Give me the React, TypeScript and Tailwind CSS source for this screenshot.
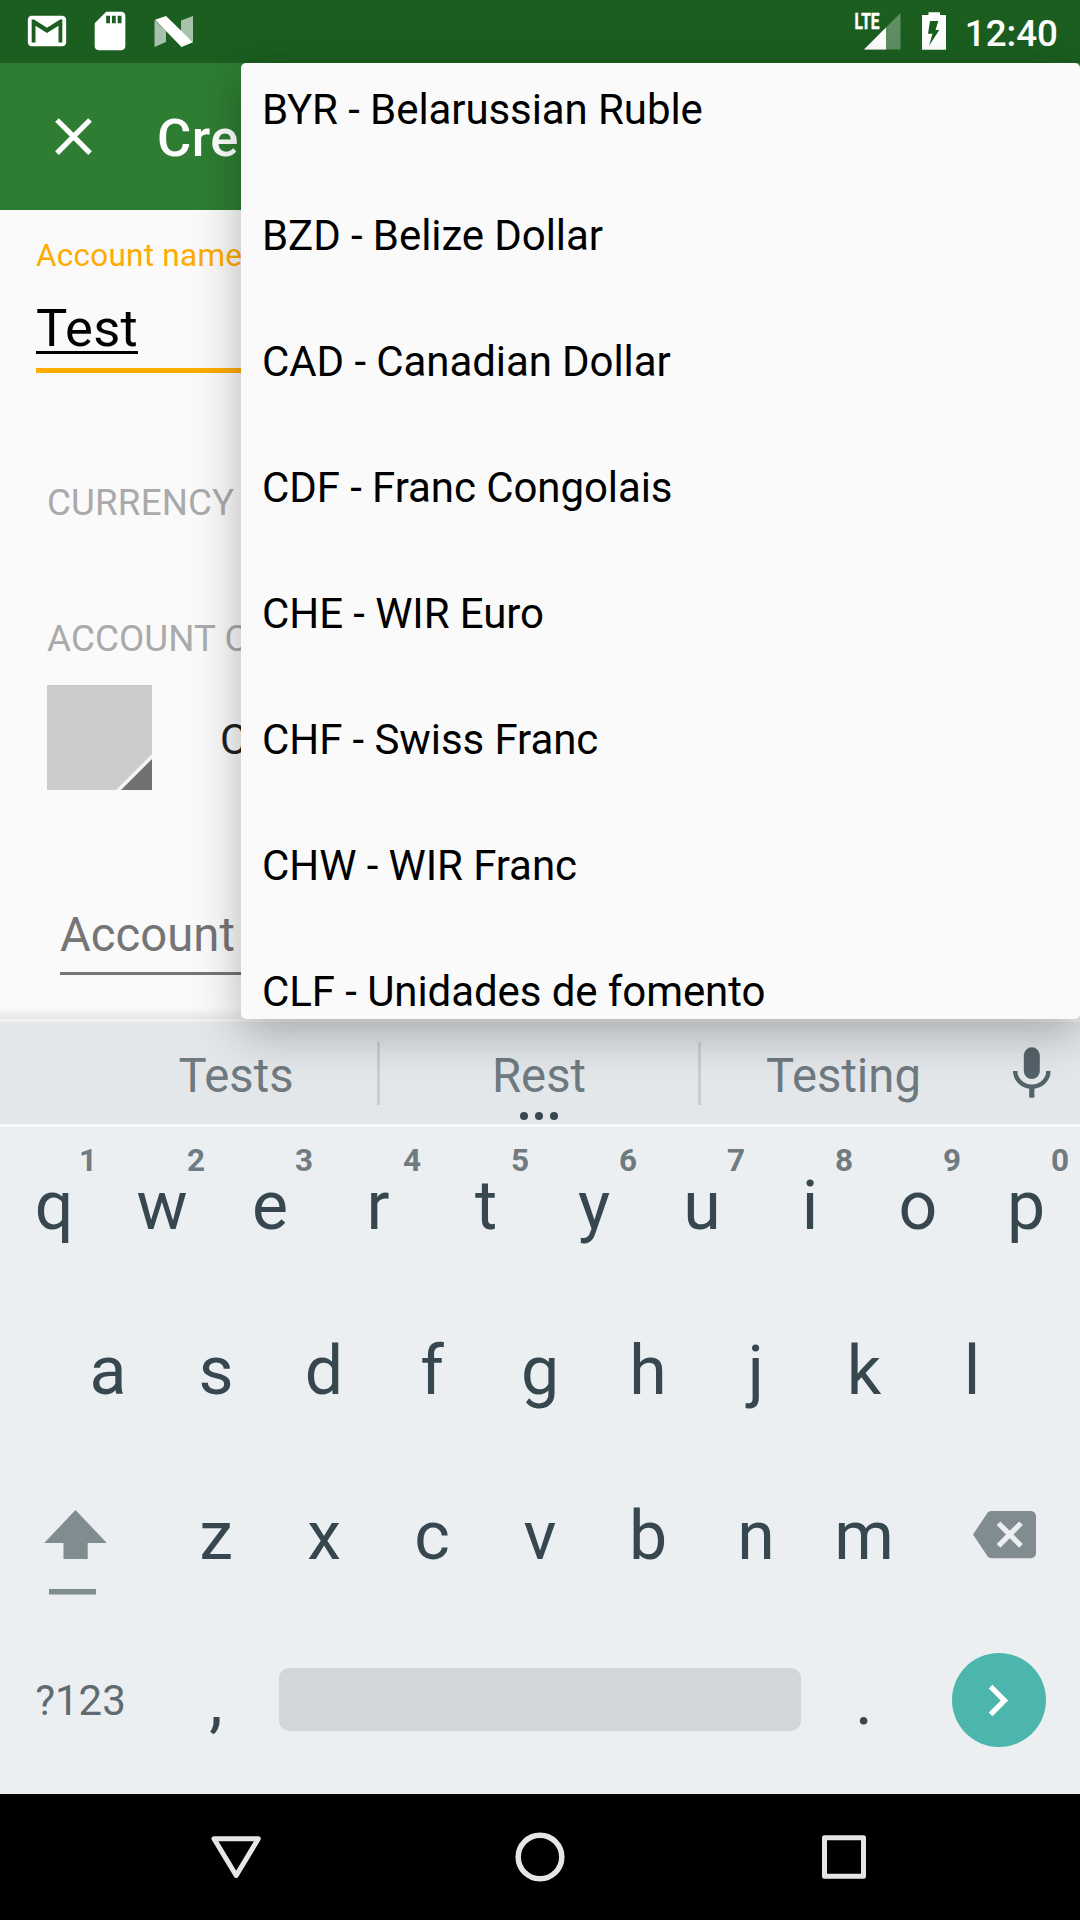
import React from "react";

const currencies = [
  "BYR - Belarussian Ruble",
  "BZD - Belize Dollar",
  "CAD - Canadian Dollar",
  "CDF - Franc Congolais",
  "CHE - WIR Euro",
  "CHF - Swiss Franc",
  "CHW - WIR Franc",
  "CLF - Unidades de fomento",
];

const topRow: [string, string][] = [
  ["q", "1"], ["w", "2"], ["e", "3"], ["r", "4"], ["t", "5"],
  ["y", "6"], ["u", "7"], ["i", "8"], ["o", "9"], ["p", "0"],
];

function StatusBar() {
  return (
    <header className="flex h-[63px] shrink-0 items-start bg-[#1b5e20] text-white">
      <svg className="ml-[24px] mt-2 size-[46px]" viewBox="0 0 24 24" fill="currentColor">
        <path d="M20 4H4c-1.1 0-2 .9-2 2v12c0 1.1.9 2 2 2h16c1.1 0 2-.9 2-2V6c0-1.1-.9-2-2-2zm0 14h-2V9.25L12 13 6 9.25V18H4V6h1.2l6.8 4.25L18.8 6H20v12z" />
      </svg>
      <svg className="ml-[17px] mt-2 size-[46px]" viewBox="0 0 24 24" fill="currentColor">
        <path d="M18 2h-8L4.02 8 4 20c0 1.1.9 2 2 2h12c1.1 0 2-.9 2-2V4c0-1.1-.9-2-2-2zm-6 6h-2V4h2v4zm3 0h-2V4h2v4zm3 0h-2V4h2v4z" />
      </svg>
      <svg className="ml-[17px] mt-2 h-[46px] w-[50px]" viewBox="150 8 50 46" fill="currentColor">
        <path opacity=".62" d="M154.5 20v27l11.500-5V31zM181 20.500l12-4.500v26l-12-11z" />
        <path d="M155 19.800L166 16l27 26.300L181.500 47z" />
      </svg>
      <svg className="ml-auto mt-2 h-[46px] w-[50px]" viewBox="853 8 50 46" fill="currentColor">
        <path opacity=".3" d="M864 49.500h36.500V13z" />
        <path d="M864 49.500h22V27.500z" />
        <text x="854.5" y="29.2" fontFamily="Roboto" fontWeight="700" fontSize="22" stroke="currentColor" strokeWidth=".5" textLength="25" lengthAdjust="spacingAndGlyphs">LTE</text>
      </svg>
      <svg className="ml-[17px] mt-2 h-[46px] w-[28px]" viewBox="920 8 28 46" fill="currentColor">
        <path fillRule="evenodd" d="M928.500 12.300H940V15h6v34.700h-24V15h6.500zM930 21l-2 12.700h4.500L929 45.700 939.300 30h-3.800l2.800-9z" />
      </svg>
      <span className="ml-[17px] mr-[22px] mt-2 text-[36.75px] font-medium leading-[51px]">12:40</span>
    </header>
  );
}

function AppBar() {
  return (
    <div className="flex h-[147px] shrink-0 items-center bg-[#2e7d32] text-white">
      <svg className="ml-[42px] size-[63px]" viewBox="0 0 24 24" fill="currentColor">
        <path d="M19 6.410L17.590 5 12 10.590 6.410 5 5 6.410 10.590 12 5 17.590 6.410 19 12 13.410 17.590 19 19 17.590 13.410 12z" />
      </svg>
      <h1 className="ml-[52px] mt-[3px] text-[52.5px] font-medium leading-[60px] tracking-[0.5px]">Cre</h1>
    </div>
  );
}

function AccountForm() {
  return (
    <main className="flex h-[809px] shrink-0 flex-col items-start bg-[#fafafa]">
      <label className="ml-9 mt-[26px] text-[31.5px] leading-10 tracking-[0.25px] text-[#ffab00]">Account name</label>
      <div className="ml-9 mt-[30px] border-b-3 border-black text-[52.5px] leading-[45px] tracking-[0.3px] text-black">Test</div>
      <div className="ml-9 mt-[14px] h-[5px] w-[1008px] bg-[#ffab00]" />
      <div className="ml-[47px] mt-[110px] text-[36.75px] leading-10 tracking-[0.15px] text-[#aaaaaa]">CURRENCY</div>
      <div className="ml-[47px] mt-24 text-[36.75px] leading-10 tracking-[0.1px] text-[#aaaaaa]">ACCOUNT C</div>
      <div className="ml-[47px] mt-[26px] flex items-center">
        <svg className="size-[105px]" viewBox="0 0 105 105">
          <path fill="#cccccc" d="M0 0h105v105H0z" />
          <path fill="#f5f5f5" d="M105 69v36H69z" />
          <path fill="#707070" d="M105 74v31H74z" />
        </svg>
        <span className="ml-[68px] mt-1 text-[42px] leading-[50px] text-[#212121]">C</span>
      </div>
      <div className="ml-[60px] mt-[120px] text-[47.25px] leading-[50px] text-[#757575]">Account</div>
      <div className="ml-[60px] mt-[12px] h-[2.5px] w-[960px] bg-[#757575]" />
      <div className="mt-auto h-3 w-full bg-linear-to-b from-transparent to-black/8" />
    </main>
  );
}

function CurrencyMenu() {
  return (
    <ul className="absolute left-[241px] top-[63px] h-[956px] w-[839px] rounded-[5px] bg-[#fafafa] text-[42px] text-black shadow-[0_14px_48px_rgba(0,0,0,0.28)]">
      <div className="-mt-4">
        {currencies.map((c) => (
          <li key={c} className="h-[126px] pl-[21px] leading-[126px] tracking-[-0.08px] last:h-[90px]">{c}</li>
        ))}
      </div>
    </ul>
  );
}

function Suggestions() {
  return (
    <div className="flex h-[102px] items-center bg-[#e3e7ea] text-center text-[47.25px] leading-[60px] text-[#6e7a80]">
      <span className="ml-[95px] mt-1.5 w-[282px]">Tests</span>
      <span className="h-[63px] w-[3px] bg-[#c9cfd1]" />
      <span className="relative mt-1.5 w-[318px]">
        Rest
        <span className="absolute left-[140px] top-[66px] flex gap-[7px]">
          <i className="size-2 rounded-full bg-[#37474f]" />
          <i className="size-2 rounded-full bg-[#37474f]" />
          <i className="size-2 rounded-full bg-[#37474f]" />
        </span>
      </span>
      <span className="h-[63px] w-[3px] bg-[#c9cfd1]" />
      <span className="mt-1.5 w-[285px]">Testing</span>
      <svg className="ml-[14px] size-[63px]" viewBox="1000 1042 63 63" fill="#546269">
        <rect x="1023.800" y="1047.300" width="16" height="31.700" rx="8" />
        <path fill="none" stroke="#546269" strokeWidth="4.400" d="M1015.200 1071a16.600 15.600 0 0 0 33.200 0" />
        <path d="M1029.200 1086h5.200v11.700h-5.200z" />
      </svg>
    </div>
  );
}

function Key({ label, hint }: { label: string; hint?: string }) {
  return (
    <div className="relative w-[108px] shrink-0 text-center leading-[158px]">
      {label}
      {hint && (
        <span className="absolute left-[79px] top-[19px] text-[31.5px] font-bold leading-[30px] text-[#6f7b80]">{hint}</span>
      )}
    </div>
  );
}

function Keyboard() {
  return (
    <section className="flex h-[772px] shrink-0 flex-col bg-[#ebeff2] text-[68px] text-[#37474f]">
      <Suggestions />
      <div className="h-[3px] bg-[#f7f9fa]" />
      <div className="flex h-[165px]">
        {topRow.map(([k, n]) => <Key key={k} label={k} hint={n} />)}
      </div>
      <div className="flex h-[165px] justify-center">
        {"asdfghjkl".split("").map((k) => <Key key={k} label={k} />)}
      </div>
      <div className="flex h-[165px]">
        <svg className="h-[165px] w-[162px]" viewBox="0 1457 162 165" fill="#808c90">
          <path d="M75.500 1510l31.300 33H87.700v16H63.500v-16H44.200zM49 1589h47v5.500H49z" />
        </svg>
        {"zxcvbnm".split("").map((k) => <Key key={k} label={k} />)}
        <svg className="ml-[55px] mt-[46px] size-[63px]" viewBox="0 0 24 24" fill="#808c90">
          <path d="M22 3H7c-.69 0-1.230.35-1.590.88L0 12l5.410 8.110c.36.53.9.89 1.590.89h15c1.100 0 2-.9 2-2V5c0-1.100-.9-2-2-2zm-3 12.590L17.590 17 14 13.410 10.410 17 9 15.590 12.590 12 9 8.410 10.410 7 14 10.590 17.590 7 19 8.410 15.410 12 19 15.590z" />
        </svg>
      </div>
      <div className="flex h-[158px]">
        <span className="w-[161px] text-center text-[42px] leading-[158px] text-[#5f6b70]">?123</span>
        <span className="w-px" />
        <Key label="," />
        <span className="ml-[9px] mt-[46px] h-[63px] w-[522px] rounded-[10px] bg-[#d1d6d9]" />
        <span className="w-[9px]" />
        <Key label="." />
        <span className="ml-[34px] mt-[31px] flex size-[94px] items-center justify-center rounded-full bg-[#4db6ac]">
          <svg className="size-[63px]" viewBox="0 0 24 24" fill="white">
            <path d="M9.300 6L7.890 7.410 12.470 12l-4.580 4.590L9.300 18l6-6z" />
          </svg>
        </span>
      </div>
    </section>
  );
}

function NavBar() {
  return (
    <nav className="flex h-[126px] shrink-0 items-center bg-black">
      <svg className="ml-[204px] size-16" viewBox="204 1825 64 64" fill="none" stroke="#e6e6e6" strokeWidth="5" strokeLinejoin="round">
        <path d="M214 1838.700h44.300L236.200 1875.500z" />
      </svg>
      <svg className="ml-[240px] size-16" viewBox="0 0 64 64" fill="none" stroke="#e6e6e6" strokeWidth="5.500">
        <circle cx="32" cy="32" r="21.800" />
      </svg>
      <svg className="ml-[240px] size-16" viewBox="0 0 64 64" fill="none" stroke="#e6e6e6" strokeWidth="5" strokeLinejoin="round">
        <path d="M12.500 12.700h39v38.500h-39z" />
      </svg>
    </nav>
  );
}

export default function App() {
  return (
    <div className="relative flex h-[1920px] w-[1080px] flex-col overflow-hidden bg-[#fafafa] font-[Roboto,sans-serif]">
      <StatusBar />
      <AppBar />
      <AccountForm />
      <div className="h-[3px] shrink-0 bg-[#f1f1f1]" />
      <Keyboard />
      <NavBar />
      <CurrencyMenu />
    </div>
  );
}
